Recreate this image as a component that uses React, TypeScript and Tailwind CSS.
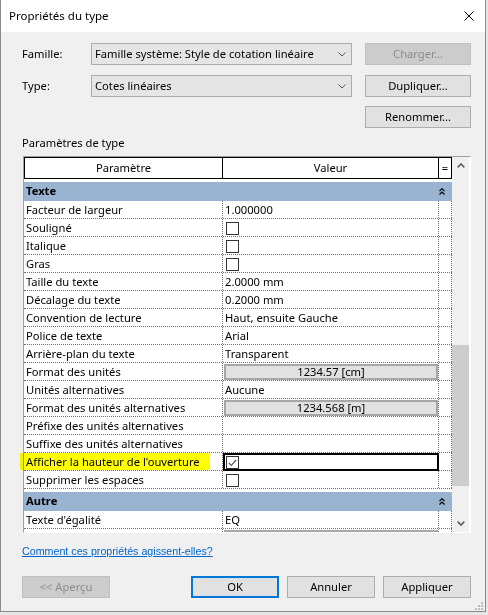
import React from "react";

const FONT = "font-['Noto_Sans','Liberation_Sans',sans-serif]";

type Value =
  | { kind: "text"; text: string }
  | { kind: "check"; checked?: boolean; focused?: boolean }
  | { kind: "button"; text: string }
  | { kind: "empty" };

type Param = { label: string; value: Value };

const GROUPS: { name: string; rows: Param[] }[] = [
  {
    name: "Texte",
    rows: [
      { label: "Facteur de largeur", value: { kind: "text", text: "1.000000" } },
      { label: "Souligné", value: { kind: "check" } },
      { label: "Italique", value: { kind: "check" } },
      { label: "Gras", value: { kind: "check" } },
      { label: "Taille du texte", value: { kind: "text", text: "2.0000 mm" } },
      { label: "Décalage du texte", value: { kind: "text", text: "0.2000 mm" } },
      { label: "Convention de lecture", value: { kind: "text", text: "Haut, ensuite Gauche" } },
      { label: "Police de texte", value: { kind: "text", text: "Arial" } },
      { label: "Arrière-plan du texte", value: { kind: "text", text: "Transparent" } },
      { label: "Format des unités", value: { kind: "button", text: "1234.57 [cm]" } },
      { label: "Unités alternatives", value: { kind: "text", text: "Aucune" } },
      { label: "Format des unités alternatives", value: { kind: "button", text: "1234.568 [m]" } },
      { label: "Préfixe des unités alternatives", value: { kind: "empty" } },
      { label: "Suffixe des unités alternatives", value: { kind: "empty" } },
      { label: "Afficher la hauteur de l'ouverture", value: { kind: "check", checked: true, focused: true } },
      { label: "Supprimer les espaces", value: { kind: "check" } },
    ],
  },
  {
    name: "Autre",
    rows: [
      { label: "Texte d'égalité", value: { kind: "text", text: "EQ" } },
      // only the top edge of this row shows under the fold
      { label: "", value: { kind: "button", text: "" } },
    ],
  },
];

function ComboChevron() {
  return (
    <svg width="8" height="5" viewBox="0 0 8 5">
      <path d="M0.5 0.5 L4 4 L7.5 0.5" stroke="#5a5a5a" strokeWidth="1" fill="none" />
    </svg>
  );
}

function ScrollArrow({ down }: { down?: boolean }) {
  return (
    <svg width="8" height="5" viewBox="0 0 8 5">
      <path
        d={down ? "M0.7 0.7 L4 4 L7.3 0.7" : "M0.7 4.3 L4 1 L7.3 4.3"}
        stroke="#606060"
        strokeWidth="1.7"
        fill="none"
      />
    </svg>
  );
}

function CollapseIcon() {
  return (
    <svg width="6" height="7" viewBox="0 0 6 7">
      <path d="M0.5 3.2 L3 0.7 L5.5 3.2 M0.5 6.5 L3 4 L5.5 6.5" stroke="#000" strokeWidth="1.2" fill="none" />
    </svg>
  );
}

function CheckBox({ checked }: { checked?: boolean }) {
  return (
    <div className="flex h-[13px] w-[13px] items-center justify-center border border-[#333333] bg-white">
      {checked && (
        <svg width="9" height="8" viewBox="0 0 9 8">
          <path d="M0.8 4 L3.3 6.5 L8.2 1" stroke="#5a5a5a" strokeWidth="1.2" fill="none" />
        </svg>
      )}
    </div>
  );
}

function ValueCell({ value }: { value: Value }) {
  return (
    <div className="relative h-full w-[216px] border-r border-dotted border-[#6f6f6f]">
      {value.kind === "text" && <div className="pl-[2px] leading-[17px]">{value.text}</div>}
      {value.kind === "check" && (
        <div className="pl-[3px] pt-[3px]">
          <CheckBox checked={value.checked} />
        </div>
      )}
      {value.kind === "button" && (
        <div className="ml-[1px] mt-[1px] flex h-[16px] w-[214px] items-center justify-center border-2 border-[#a7a7a7] bg-[#e1e1e1] leading-[12px]">
          {value.text}
        </div>
      )}
      {value.kind === "check" && value.focused && (
        <div className="absolute left-0 top-0 right-[-1px] bottom-[-1px] border-2 border-black" />
      )}
    </div>
  );
}

function ParamRow({ row }: { row: Param }) {
  return (
    <div className="flex h-[18px] border-b border-dotted border-[#6f6f6f]">
      <div className="w-[199px] overflow-hidden whitespace-nowrap border-r border-dotted border-[#6f6f6f] pl-[2px] leading-[17px]">
        {row.label}
      </div>
      <ValueCell value={row.value} />
      <div className="w-[13px] border-r border-dotted border-[#6f6f6f]" />
    </div>
  );
}

function Button({ label, disabled, primary }: { label: string; disabled?: boolean; primary?: boolean }) {
  return (
    <div
      className={
        disabled
          ? "flex h-[22px] w-full items-center justify-center border border-[#bfbfbf] bg-[#cccccc] text-[#8c8c8c]"
          : primary
            ? "flex h-[22px] w-full items-center justify-center border-2 border-[#0078d7] bg-[#e1e1e1]"
            : "flex h-[22px] w-full items-center justify-center border border-[#adadad] bg-[#e1e1e1]"
      }
    >
      {label}
    </div>
  );
}

export default function App() {
  return (
    <div className={`h-[615px] w-[488px] overflow-hidden bg-[#e6e6e6] text-[11.2px] text-black ${FONT}`}>
      <div className="flex h-[612px] w-[486px] flex-col border-x border-b border-[#8a8a8a]">
        {/* title bar */}
        <div className="flex h-[32px] shrink-0 items-center justify-between bg-white pl-[8px] pr-[11px] text-[11.5px]">
          <span>Propriétés du type</span>
          <svg width="10" height="10" viewBox="0 0 10 10">
            <path d="M0.5 0.5 L9.5 9.5 M9.5 0.5 L0.5 9.5" stroke="#000" strokeWidth="1" />
          </svg>
        </div>

        <div className="relative flex flex-1 flex-col bg-[#f0f0f0] pl-[21px] pr-[14px]">
          <div className="mt-[11px] flex h-[22px] items-center">
            <div className="w-[69px]">Famille:</div>
            <div className="flex h-[22px] w-[261px] items-center justify-between border border-[#acacac] bg-[#e5e5e5] pl-[3px] pr-[5px]">
              <span>Famille système: Style de cotation linéaire</span>
              <ComboChevron />
            </div>
            <div className="ml-auto w-[106px]">
              <Button label="Charger..." disabled />
            </div>
          </div>

          <div className="mt-[10px] flex h-[22px] items-center">
            <div className="w-[69px]">Type:</div>
            <div className="flex h-[22px] w-[261px] items-center justify-between border border-[#acacac] bg-[#e5e5e5] pl-[3px] pr-[5px]">
              <span>Cotes linéaires</span>
              <ComboChevron />
            </div>
            <div className="ml-auto w-[106px]">
              <Button label="Dupliquer..." />
            </div>
          </div>

          <div className="mt-[9px] flex justify-end">
            <div className="w-[106px]">
              <Button label="Renommer..." />
            </div>
          </div>

          <div className="mt-[7px] leading-[16px]">Paramètres de type</div>

          {/* property grid */}
          <div className="relative ml-[1px] mt-[5px] flex h-[377px] w-[448px] border border-t-[#a0a0a0] border-l-[#a0a0a0] border-r-white border-b-white bg-white">
            <div className="w-[428px] overflow-hidden">
              <div className="flex h-[22px] border-y border-black">
                <div className="flex w-[199px] items-center justify-center border-x border-black">Paramètre</div>
                <div className="flex w-[216px] items-center justify-center border-r border-black">Valeur</div>
                <div className="flex w-[13px] items-center justify-center border-r border-black">=</div>
              </div>
              {GROUPS.map((g) => (
                <div key={g.name}>
                  <div className="bg-white pt-[3px]">
                    <div className="flex h-[19px] items-center justify-between bg-[#99b4d1] pl-[2px] pr-[7px] font-bold">
                      <span>{g.name}</span>
                      <CollapseIcon />
                    </div>
                  </div>
                  {g.rows.map((r, i) => (
                    <ParamRow key={i} row={r} />
                  ))}
                </div>
              ))}
            </div>

            {/* scrollbar */}
            <div className="flex w-[17px] flex-col bg-[#f0f0f0]">
              <div className="flex h-[17px] items-center justify-center">
                <ScrollArrow />
              </div>
              <div className="flex-1">
                <div className="mt-[171px] h-[141px] w-full bg-[#cdcdcd]" />
              </div>
              <div className="flex h-[17px] items-center justify-center">
                <ScrollArrow down />
              </div>
            </div>

            {/* marker highlight */}
            <div className="pointer-events-none absolute left-[-4px] top-[296px] h-[17px] w-[190px] bg-[#ffff00] mix-blend-multiply" />
          </div>

          <div className="mt-[10px] leading-[16px]">
            <span className="font-['Liberation_Sans',sans-serif] text-[10.7px] text-[#0066cc] underline">
              Comment ces propriétés agissent-elles?
            </span>
          </div>

          <div className="mt-[17px] flex">
            <div className="w-[88px]">
              <Button label="<< Aperçu" disabled />
            </div>
            <div className="ml-auto flex gap-[8px]">
              <div className="w-[88px]">
                <Button label="OK" primary />
              </div>
              <div className="w-[88px]">
                <Button label="Annuler" />
              </div>
              <div className="w-[88px]">
                <Button label="Appliquer" />
              </div>
            </div>
          </div>

          {/* size grip */}
          <svg className="absolute bottom-[1px] right-[2px]" width="9" height="9" viewBox="0 0 9 9">
            <g fill="#bcbcbc">
              <rect x="7" y="1" width="2" height="2" />
              <rect x="4" y="4" width="2" height="2" />
              <rect x="7" y="4" width="2" height="2" />
              <rect x="1" y="7" width="2" height="2" />
              <rect x="4" y="7" width="2" height="2" />
              <rect x="7" y="7" width="2" height="2" />
            </g>
          </svg>
        </div>
      </div>
    </div>
  );
}
